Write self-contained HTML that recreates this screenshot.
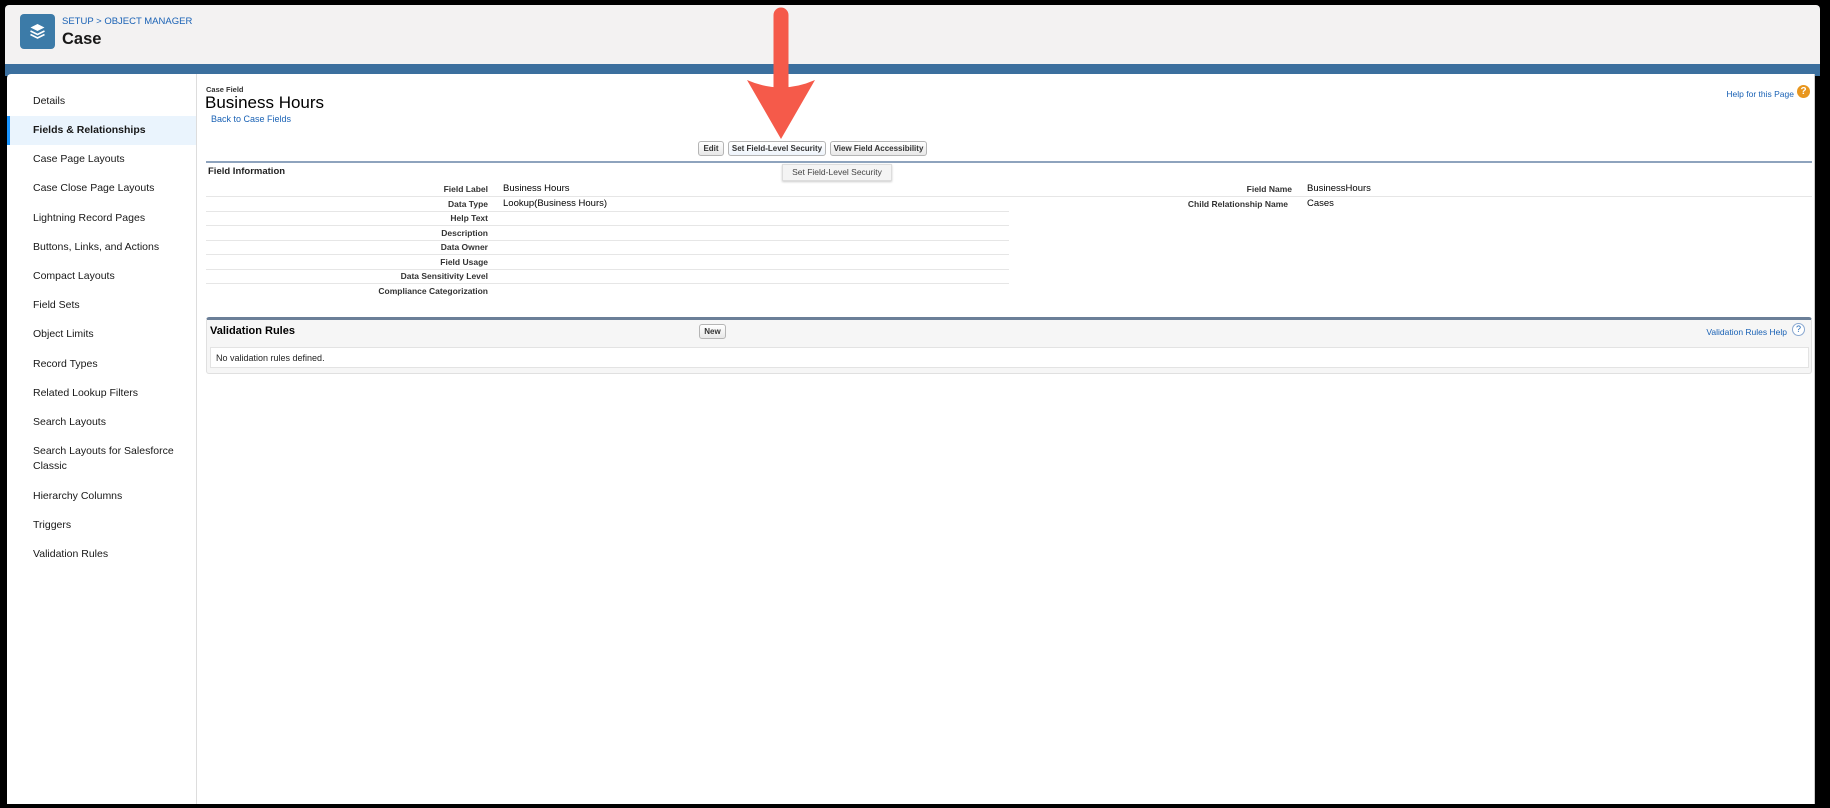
<!DOCTYPE html>
<html><head><meta charset="utf-8"><style>
*{margin:0;padding:0;box-sizing:border-box}
body{width:1830px;height:808px;background:#000;position:relative;overflow:hidden;font-family:"Liberation Sans",Arial,sans-serif;color:#222}
.a{position:absolute}
#hdr{left:5px;top:5px;width:1815px;height:60px;background:#f3f2f2;border-radius:4px 4px 0 0}
#band{left:5px;top:64px;width:1815px;height:12px;background:#3b6f9e}
#side{left:7px;top:74px;width:189px;height:730px;background:#fff;border-radius:4px 0 0 0}
#main{left:197px;top:74px;width:1618px;height:730px;background:#fff;border-right:1px solid #ccc}
.nav{position:absolute;left:26px;font-size:10.5px;color:#181818;white-space:nowrap}
.lbl{position:absolute;font-size:8.5px;font-weight:bold;color:#333;text-align:right;width:300px}
.val{position:absolute;font-size:9.5px;color:#000}
.sep{position:absolute;height:1px;background:#e6e6e6}
.btn{position:absolute;height:15px;border:1px solid #b5b5b5;border-radius:3px;background:linear-gradient(#fff,#e8e8e8);font-size:8px;font-weight:bold;color:#333;text-align:center;line-height:13px;white-space:nowrap}
.lnk{color:#1a62b5}
</style></head><body>
<div class="a" id="hdr"></div>
<div class="a" id="band"></div>
<div class="a" style="left:20px;top:14px;width:35px;height:35px;background:#3c7ba8;border-radius:4px">
<svg width="35" height="35" viewBox="0 0 35 35"><path d="M17.5 10l7 3.5-7 3.5-7-3.5z" fill="#fff"/><path d="M10.5 17l7 3.5 7-3.5M10.5 20.5l7 3.5 7-3.5" stroke="#fff" stroke-width="1.6" fill="none"/></svg></div>
<div class="a" style="left:62px;top:16px;font-size:9.5px;color:#1a62b5">SETUP &gt; OBJECT MANAGER</div>
<div class="a" style="left:62px;top:30px;font-size:16.5px;font-weight:bold;color:#181818">Case</div>
<div class="a" id="side">
<div class="a" style="left:0;top:42px;width:189px;height:29px;background:#eaf4fd;border-left:3px solid #1b96ff"></div>
<div class="nav" style="top:21px">Details</div>
<div class="nav" style="top:50px;font-weight:bold">Fields &amp; Relationships</div>
<div class="nav" style="top:79px">Case Page Layouts</div>
<div class="nav" style="top:108px">Case Close Page Layouts</div>
<div class="nav" style="top:138px">Lightning Record Pages</div>
<div class="nav" style="top:167px">Buttons, Links, and Actions</div>
<div class="nav" style="top:196px">Compact Layouts</div>
<div class="nav" style="top:225px">Field Sets</div>
<div class="nav" style="top:254px">Object Limits</div>
<div class="nav" style="top:284px">Record Types</div>
<div class="nav" style="top:313px">Related Lookup Filters</div>
<div class="nav" style="top:342px">Search Layouts</div>
<div class="nav" style="top:370px;line-height:15px;white-space:normal;width:150px">Search Layouts for Salesforce Classic</div>
<div class="nav" style="top:416px">Hierarchy Columns</div>
<div class="nav" style="top:445px">Triggers</div>
<div class="nav" style="top:474px">Validation Rules</div>
</div>
<div class="a" style="left:196px;top:74px;width:1px;height:730px;background:#ddd"></div>
<div class="a" id="main"></div>
<div class="a" style="left:206px;top:85px;font-size:7.5px;font-weight:bold;color:#333">Case Field</div>
<div class="a" style="left:205px;top:93px;font-size:17px;color:#000">Business Hours</div>
<div class="a lnk" style="left:211px;top:114px;font-size:9px">Back to Case Fields</div>
<div class="a lnk" style="right:36px;top:89px;font-size:8.5px">Help for this Page</div>
<div class="a" style="left:1797px;top:85px;width:13px;height:13px;border-radius:50%;background:#e8961e;color:#fff;font-size:10px;font-weight:bold;text-align:center;line-height:13px">?</div>
<div class="btn" style="left:698px;top:141px;width:26px">Edit</div>
<div class="btn" style="left:728px;top:141px;width:98px;background:linear-gradient(#fff,#eef4fb)">Set Field-Level Security</div>
<div class="btn" style="left:830px;top:141px;width:97px">View Field Accessibility</div>
<div class="a" style="left:206px;top:161px;width:1606px;height:2px;background:#8ea3bd"></div>
<div class="a" style="left:782px;top:164px;width:110px;height:17px;background:#f4f4f4;border:1px solid #ddd;font-size:8.5px;color:#444;line-height:15px;text-align:center;box-shadow:0 1px 2px #ccc">Set Field-Level Security</div>
<div class="a" style="left:208px;top:166px;font-size:9.5px;font-weight:bold;color:#222">Field Information</div>
<div class="lbl" style="left:188px;top:184px">Field Label</div><div class="val" style="left:503px;top:183px">Business Hours</div>
<div class="lbl" style="left:188px;top:199px">Data Type</div><div class="val" style="left:503px;top:198px">Lookup(Business Hours)</div>
<div class="lbl" style="left:188px;top:213px">Help Text</div>
<div class="lbl" style="left:188px;top:228px">Description</div>
<div class="lbl" style="left:188px;top:242px">Data Owner</div>
<div class="lbl" style="left:188px;top:257px">Field Usage</div>
<div class="lbl" style="left:188px;top:271px">Data Sensitivity Level</div>
<div class="lbl" style="left:188px;top:286px">Compliance Categorization</div>
<div class="sep" style="left:206px;top:196px;width:803px"></div>
<div class="sep" style="left:206px;top:211px;width:803px"></div>
<div class="sep" style="left:206px;top:225px;width:803px"></div>
<div class="sep" style="left:206px;top:240px;width:803px"></div>
<div class="sep" style="left:206px;top:254px;width:803px"></div>
<div class="sep" style="left:206px;top:269px;width:803px"></div>
<div class="sep" style="left:206px;top:283px;width:803px"></div>
<div class="lbl" style="left:992px;top:184px">Field Name</div><div class="val" style="left:1307px;top:183px">BusinessHours</div>
<div class="lbl" style="left:988px;top:199px">Child Relationship Name</div><div class="val" style="left:1307px;top:198px">Cases</div>
<div class="sep" style="left:1009px;top:196px;width:803px"></div>
<div class="a" style="left:206px;top:317px;width:1606px;height:57px;background:#f6f6f6;border:1px solid #e0e0e0;border-top:3px solid #6b7f98;border-radius:3px"></div>
<div class="a" style="left:210px;top:325px;font-size:11px;font-weight:bold;color:#000">Validation Rules</div>
<div class="btn" style="left:699px;top:324px;width:27px">New</div>
<div class="a lnk" style="right:43px;top:327px;font-size:8.5px">Validation Rules Help</div>
<div class="a" style="left:1792px;top:323px;width:13px;height:13px;border-radius:50%;border:1px solid #8aa8d0;background:#fff;color:#1a62b5;font-size:9px;text-align:center;line-height:11px">?</div>
<div class="a" style="left:210px;top:347px;width:1599px;height:21px;background:#fff;border:1px solid #e3e3e3"></div>
<div class="a" style="left:216px;top:353px;font-size:9px;color:#222">No validation rules defined.</div>
<svg class="a" style="left:740px;top:5px" width="84" height="140" viewBox="0 0 84 140"><line x1="41" y1="10" x2="41" y2="85" stroke="#f55a4a" stroke-width="15" stroke-linecap="round"/><path d="M7 75 Q41 90 75 75 L41 134 Z" fill="#f55a4a"/></svg>
</body></html>
